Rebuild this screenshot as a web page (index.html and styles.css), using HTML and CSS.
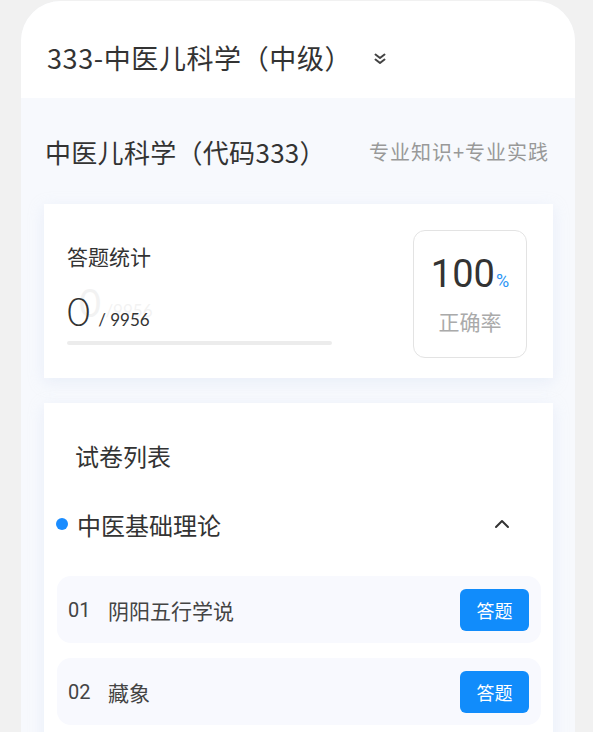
FILE: index.html
```html
<!DOCTYPE html>
<html lang="zh">
<head>
    <meta charset="UTF-8">
    <meta name="viewport" content="width=device-width, initial-scale=1.0">
    <title>中医儿科学</title>
    <link rel="stylesheet" href="styles.css">
</head>
<body>
    <div class="page">
        <div class="header">
            <span class="course">333-中医儿科学（中级）</span>
            <svg class="double-down" width="14" height="14" viewBox="0 0 14 14">
                <path d="M2.5 2.5 L7 6 L11.5 2.5 M2.5 7.5 L7 11 L11.5 7.5" fill="none" stroke="#444" stroke-width="2" stroke-linecap="round" stroke-linejoin="round"/>
            </svg>
        </div>

        <div class="content">
            <div class="subject">
                <span class="subject-name">中医儿科学（代码333）</span>
                <span class="subject-type">专业知识+专业实践</span>
            </div>

            <div class="stats card">
                <div class="stats-left">
                    <div class="stats-title">答题统计</div>
                    <div class="stats-count">
                        <span class="done">0</span>
                        <span class="total">/ 9956</span>
                        <span class="ghost"><b>0</b> /9956</span>
                    </div>
                    <div class="bar"><div class="bar-fill" style="width: 0%"></div></div>
                </div>
                <div class="rate">
                    <div class="rate-num">100<span class="pct">%</span></div>
                    <div class="rate-label">正确率</div>
                </div>
            </div>

            <div class="papers card">
                <div class="papers-title">试卷列表</div>
                <div class="section">
                    <span class="dot"></span>
                    <span class="section-name">中医基础理论</span>
                    <svg class="up" width="18" height="12" viewBox="0 0 18 12">
                        <path d="M3 9 L9 3 L15 9" fill="none" stroke="#333" stroke-width="2" stroke-linecap="round" stroke-linejoin="round"/>
                    </svg>
                </div>
                <div class="item">
                    <span class="num">01</span>
                    <span class="name">阴阳五行学说</span>
                    <button class="go">答题</button>
                </div>
                <div class="item">
                    <span class="num">02</span>
                    <span class="name">藏象</span>
                    <button class="go">答题</button>
                </div>
            </div>
        </div>
    </div>
</body>
</html>
```

FILE: styles.css
```css
body {
    margin: 0;
    padding: 0;
    background: #f1f1f1;
    font-family: "Noto Sans CJK SC", "Noto Sans", sans-serif;
    color: #333;
    overflow: hidden;
}

.page {
    width: 554px;
    margin: 1px 0 0 21px;
    border-radius: 40px 40px 0 0;
    overflow: hidden;
    background: #f7f9fd;
    height: 760px;
}

.header {
    height: 97px;
    background: #fff;
    display: flex;
    align-items: center;
    padding-left: 26px;
    padding-top: 16px;
    box-sizing: border-box;
}

.course {
    font-size: 27px;
    color: #333;
    letter-spacing: 0.6px;
}

.double-down {
    margin-left: 21px;
    margin-top: 3px;
}

.content {
    padding: 0 22px 0 23px;
}

.subject {
    display: flex;
    align-items: center;
    justify-content: space-between;
    height: 106px;
    margin-left: 1px;
    margin-right: 4px;
}

.subject-name {
    font-size: 26px;
    letter-spacing: 0.3px;
    color: #333;
}

.subject-type {
    font-size: 20px;
    letter-spacing: 1px;
    color: #999;
}

.card {
    background: #fff;
    box-shadow: 0 4px 14px rgba(205, 218, 240, 0.35);
}

.stats {
    display: flex;
    justify-content: space-between;
    padding: 26px 26px 20px 23px;
}

.stats-left {
    padding-top: 11px;
}

.stats-title {
    font-size: 21px;
    line-height: 30px;
    color: #333;
}

.stats-count {
    position: relative;
    margin-top: 18px;
    display: flex;
    align-items: baseline;
    height: 44px;
}

.done {
    font-family: "Lato", sans-serif;
    font-weight: 300;
    font-size: 40px;
    line-height: 44px;
    color: #333;
}

.total {
    font-family: "Lato", sans-serif;
    font-size: 17px;
    color: #333;
    margin-left: 8px;
}

.ghost {
    position: absolute;
    left: 12px;
    top: -10px;
    font-family: "Lato", sans-serif;
    font-size: 17px;
    color: #333;
    opacity: 0.06;
    white-space: nowrap;
}

.ghost b {
    font-weight: normal;
    font-size: 38px;
}

.bar {
    width: 265px;
    height: 4px;
    border-radius: 2px;
    background: #ececec;
    margin-top: 8px;
}

.bar-fill {
    height: 100%;
    background: #1890ff;
}

.rate {
    width: 114px;
    height: 128px;
    box-sizing: border-box;
    border: 1px solid #e3e3e3;
    border-radius: 12px;
    display: flex;
    flex-direction: column;
    align-items: center;
    justify-content: center;
}

.rate-num {
    font-family: "Roboto", sans-serif;
    font-size: 38px;
    line-height: 44px;
    color: #333;
}

.pct {
    font-size: 18px;
    color: #2b95f5;
    margin-left: 1px;
}

.rate-label {
    font-size: 21px;
    color: #aaa;
    margin-top: 3px;
}

.papers {
    margin-top: 25px;
    padding: 37px 12px 20px 13px;
}

.papers-title {
    font-size: 24px;
    line-height: 32px;
    color: #333;
    padding-left: 18px;
}

.section {
    display: flex;
    align-items: center;
    height: 40px;
    margin-top: 32px;
    margin-left: -1px;
}

.dot {
    width: 12px;
    height: 12px;
    border-radius: 50%;
    background: #1a8cff;
    margin-right: 9px;
}

.section-name {
    font-size: 24px;
    color: #333;
    flex: 1;
}

.up {
    margin-right: 30px;
}

.item {
    display: flex;
    align-items: center;
    height: 67px;
    border-radius: 14px;
    background: #f8f9fe;
    padding: 0 12px 0 11px;
    margin-top: 15px;
}

.section + .item {
    margin-top: 32px;
}

.num {
    font-family: "Roboto", sans-serif;
    font-size: 20px;
    color: #444;
    width: 40px;
}

.name {
    font-size: 21px;
    color: #444;
    flex: 1;
}

.go {
    width: 69px;
    height: 42px;
    border: none;
    border-radius: 6px;
    background: #118cfb;
    color: #fff;
    font-family: "Noto Sans CJK SC", sans-serif;
    font-size: 18px;
    padding: 0;
}
```
